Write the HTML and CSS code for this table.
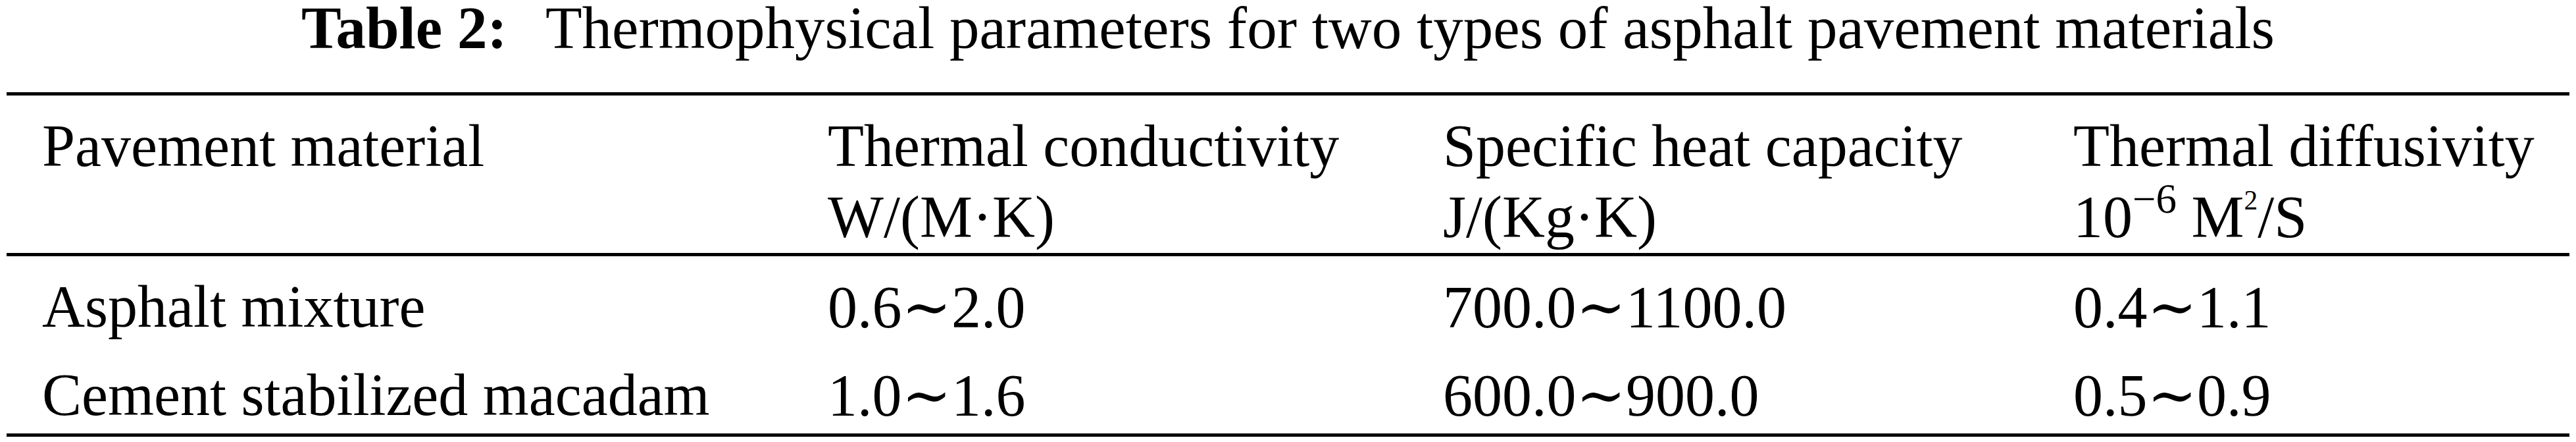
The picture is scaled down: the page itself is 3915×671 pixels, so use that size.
FILE: index.html
```html
<!DOCTYPE html>
<html lang="en">
<head>
<meta charset="utf-8">
<title>Table 2</title>
<link rel="stylesheet" href="styles.css">
</head>
<body>
<div class="page">
  <div class="title"><span class="label">Table 2:</span> Thermophysical parameters for two types of asphalt pavement materials</div>
  <table class="data">
    <colgroup>
      <col class="c1">
      <col class="c2">
      <col class="c3">
      <col class="c4">
    </colgroup>
    <thead>
      <tr>
        <th class="first">Pavement material</th>
        <th>Thermal conductivity<br>W/(M·K)</th>
        <th>Specific heat capacity<br>J/(Kg·K)</th>
        <th>Thermal diffusivity<br>10<sup class="exp">−6</sup> M<sup class="sq">2</sup>/S</th>
      </tr>
    </thead>
    <tbody>
      <tr>
        <td class="first">Asphalt mixture</td>
        <td>0.6<span class="tilde">∼</span>2.0</td>
        <td>700.0<span class="tilde">∼</span>1100.0</td>
        <td>0.4<span class="tilde">∼</span>1.1</td>
      </tr>
      <tr>
        <td class="first">Cement stabilized macadam</td>
        <td>1.0<span class="tilde">∼</span>1.6</td>
        <td>600.0<span class="tilde">∼</span>900.0</td>
        <td>0.5<span class="tilde">∼</span>0.9</td>
      </tr>
    </tbody>
  </table>
</div>
</body>
</html>
```
FILE: styles.css
```css
html, body {
  margin: 0;
  padding: 0;
  background: #fff;
}

body {
  font-family: "Liberation Serif", "Times New Roman", "DejaVu Serif", serif;
  font-size: 90px;
  color: #000;
}

.page {
  padding: 0 10px;
  width: 3895px;
}

.title {
  font-size: 91px;
  text-align: center;
  line-height: 86px;
  height: 86px;
  margin-bottom: 54px;
  white-space: nowrap;
}

.title .label {
  font-weight: bold;
  padding-right: 37px;
}

.data {
  width: 3895px;
  table-layout: fixed;
  border-collapse: separate;
  border-spacing: 0;
}

.c1 { width: 1248px; }
.c2 { width: 935px; }
.c3 { width: 958px; }
.c4 { width: 754px; }

.data th,
.data td {
  font-weight: normal;
  text-align: left;
  vertical-align: top;
  line-height: 108px;
  padding: 23px 0 2px 0;
  white-space: nowrap;
}

.data th {
  padding-bottom: 0;
  border-top: 5px solid #000;
  border-bottom: 5px solid #000;
}

.data .first {
  padding-left: 54px;
}

.data tbody tr:last-child td {
  padding-bottom: 3px;
  border-bottom: 5px solid #000;
}

.exp {
  font-size: 0.7em;
  line-height: 0;
  vertical-align: 0.59em;
}

.sq {
  font-size: 0.46em;
  line-height: 0;
  vertical-align: 1.02em;
}

.tilde {
  font-family: "DejaVu Serif", serif;
}
```
